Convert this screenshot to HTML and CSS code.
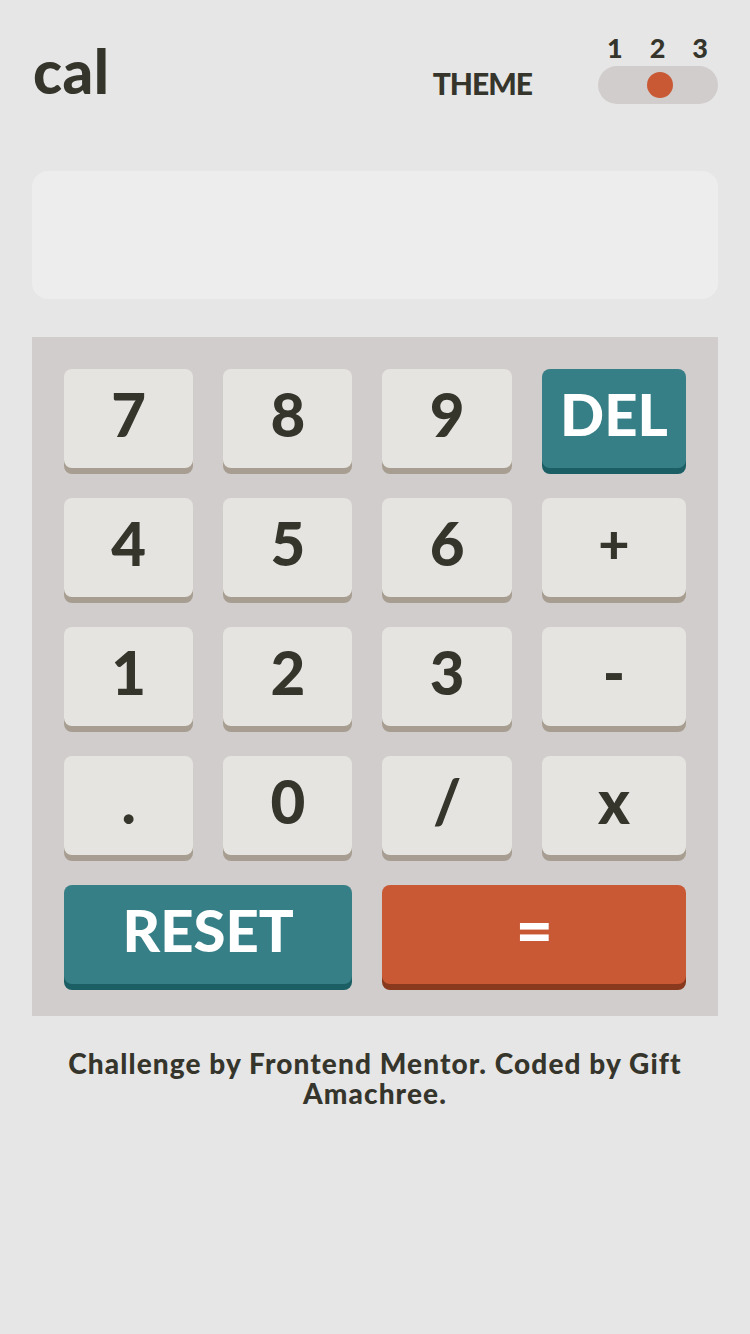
FILE: index.html
```html
<!DOCTYPE html>
<html lang="en">
<head>
<meta charset="utf-8">
<title>Calculator</title>
<link rel="stylesheet" href="styles.css">
</head>
<body>
<main class="app">
  <header class="top">
    <h1 class="logo">cal</h1>
    <div class="theme">
      <span class="theme-label">THEME</span>
      <div class="switch">
        <div class="switch-nums"><span>1</span><span>2</span><span>3</span></div>
        <div class="switch-track"><span class="switch-knob"></span></div>
      </div>
    </div>
  </header>

  <section class="screen"></section>

  <section class="keypad">
    <button class="key">7</button>
    <button class="key">8</button>
    <button class="key">9</button>
    <button class="key key-blue">DEL</button>
    <button class="key">4</button>
    <button class="key">5</button>
    <button class="key">6</button>
    <button class="key key-op">+</button>
    <button class="key">1</button>
    <button class="key">2</button>
    <button class="key">3</button>
    <button class="key">-</button>
    <button class="key">.</button>
    <button class="key">0</button>
    <button class="key">/</button>
    <button class="key">x</button>
    <button class="key key-blue key-wide">RESET</button>
    <button class="key key-orange key-wide key-eq">=</button>
  </section>

  <footer class="credit">Challenge by Frontend Mentor. Coded by Gift Amachree.</footer>
</main>
</body>
</html>
```

FILE: styles.css
```css
* { box-sizing: border-box; }

html, body {
  margin: 0;
  background: #e6e6e6;
}

body {
  font-family: "Lato", "Liberation Sans", sans-serif;
  font-weight: 900;
  color: #35352c;
}

.app {
  padding: 34px 32px 0;
}

.top {
  display: flex;
  justify-content: space-between;
  align-items: flex-end;
}

.logo {
  margin: 0 0 3px 1px;
  font-size: 60px;
  line-height: 60px;
  font-weight: 900;
  letter-spacing: 0.5px;
}

.theme {
  display: flex;
  align-items: flex-end;
  gap: 66px;
}

.theme-label {
  font-size: 30px;
  line-height: 38px;
  margin-bottom: 2px;
  letter-spacing: -1px;
}

.switch {
  width: 120px;
  display: flex;
  flex-direction: column;
}

.switch-nums {
  display: flex;
  justify-content: space-between;
  padding: 0 10px 0 9px;
  font-size: 27px;
  line-height: 28px;
  margin-bottom: 4px;
}

.switch-track {
  height: 38px;
  border-radius: 19px;
  background: #d2cdcd;
  display: flex;
  align-items: center;
  justify-content: center;
  padding-left: 4px;
}

.switch-knob {
  width: 26px;
  height: 26px;
  border-radius: 50%;
  background: #c85934;
}

.screen {
  margin-top: 67px;
  height: 128px;
  border-radius: 16px;
  background: #ededed;
}

.keypad {
  margin-top: 38px;
  background: #d2cdcd;
  padding: 32px;
  display: grid;
  grid-template-columns: 129fr 129fr 129fr 144fr;
  grid-auto-rows: 99px;
  gap: 30px;
}

.key {
  border: 0;
  margin: 0;
  border-radius: 8px;
  background: #e5e4e0;
  box-shadow: 0 6px 0 #a79e91;
  color: #35352c;
  font-family: inherit;
  font-weight: 900;
  font-size: 60px;
  line-height: 1;
  display: flex;
  align-items: center;
  justify-content: center;
  padding: 0 0 10px;
}

.key-op {
  font-size: 54px;
}

.key-eq {
  font-size: 64px;
}

.key-blue {
  background: #377f86;
  box-shadow: 0 6px 0 #1b5f65;
  color: #ffffff;
  font-size: 58px;
}

.key-orange {
  background: #c85934;
  box-shadow: 0 6px 0 #893a1e;
  color: #ffffff;
}

.key-wide {
  grid-column: span 2;
}

.credit {
  margin: 32px auto 0;
  max-width: 680px;
  text-align: center;
  font-size: 28px;
  line-height: 30px;
  letter-spacing: 1.1px;
}
```
